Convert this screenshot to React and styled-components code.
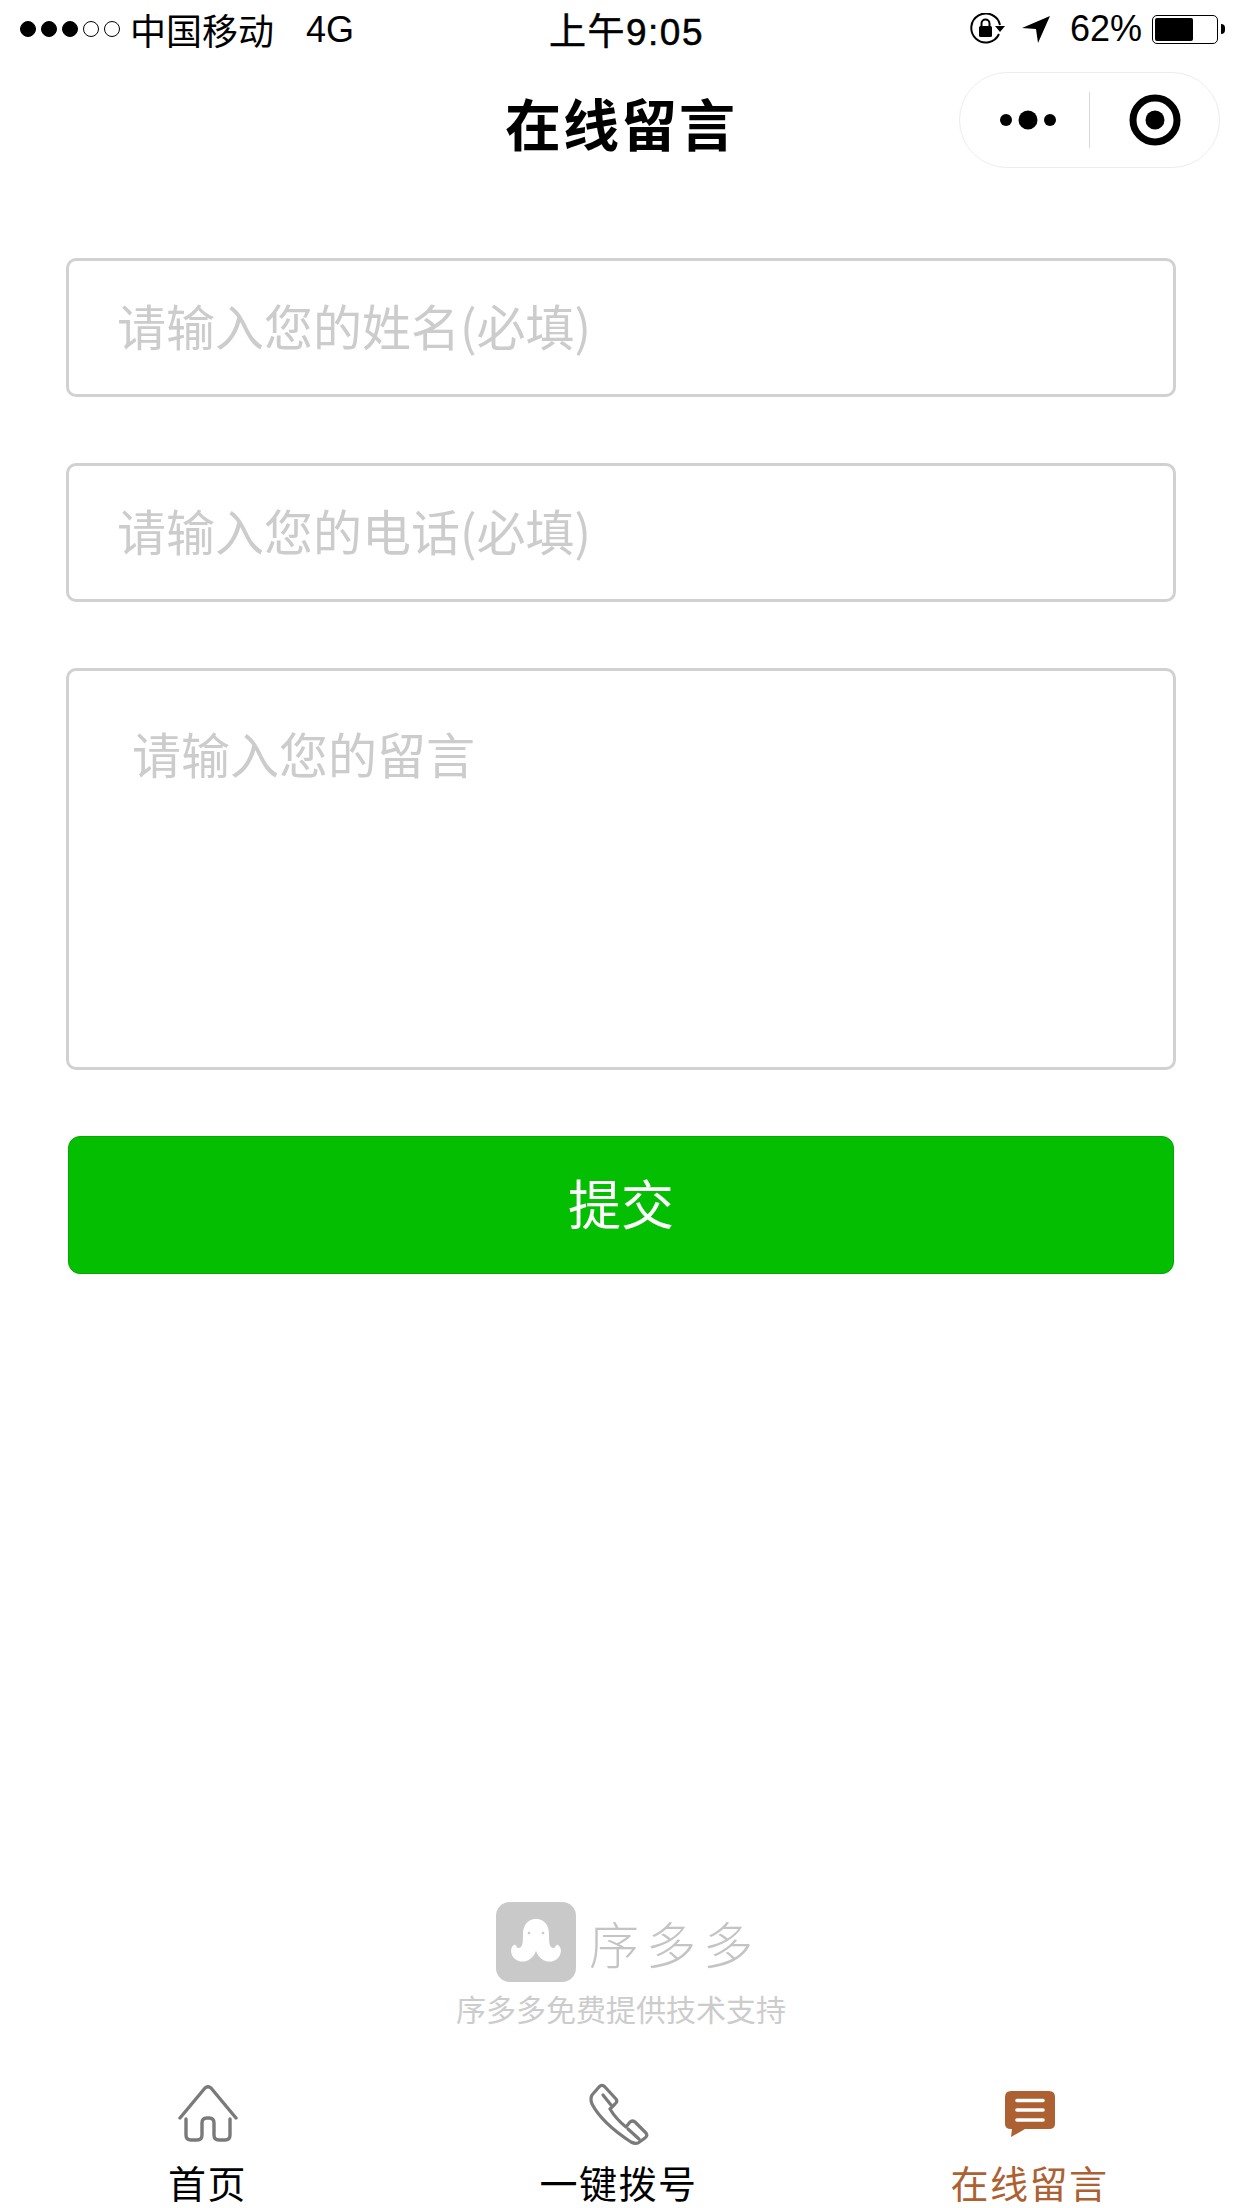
import React from "react";
import styled, { createGlobalStyle } from "styled-components";

const CJK = `"Noto Sans CJK SC", "Liberation Sans", sans-serif`;
const LATIN = `"Liberation Sans", "Noto Sans CJK SC", sans-serif`;

const GlobalStyle = createGlobalStyle`
  * { box-sizing: border-box; }
  html, body { margin: 0; padding: 0; background: #fff; }
`;

const Page = styled.div`
  width: 1242px;
  height: 2208px;
  overflow: hidden;
  display: flex;
  flex-direction: column;
  background: #fff;
  color: #000;
  font-family: ${CJK};
`;

const StatusBar = styled.div`
  height: 60px;
  padding: 0 17px 2px 20px;
  display: grid;
  grid-template-columns: 1fr auto 1fr;
  align-items: center;
  font-family: ${LATIN};
  font-size: 36px;
`;

const StatusLeft = styled.div`
  display: flex;
  align-items: center;
`;

const Signal = styled.div`
  display: flex;
  gap: 5px;
  margin-right: 10px;
`;

const Dot = styled.span`
  width: 16px;
  height: 16px;
  border-radius: 50%;
  border: 1.5px solid #000;
  background: ${(p) => (p.$on ? "#000" : "transparent")};
`;

const Network = styled.span`
  margin-left: 32px;
  padding-top: 2px;
`;

const Clock = styled.div`
  margin-left: 8px;
  font-size: 37px;
  letter-spacing: 1.5px;
  -webkit-text-stroke: 0.5px #000;
`;

const StatusRight = styled.div`
  display: flex;
  align-items: center;
  justify-content: flex-end;
  svg { display: block; }
`;

const StatusIcons = styled.div`
  display: flex;
  align-items: center;
  gap: 16px;
`;

const Percent = styled.span`
  margin: 0 10px 0 20px;
`;

const Battery = styled.div`
  position: relative;
  width: 66px;
  height: 29px;
  padding: 2px;
  border: 1.5px solid #000;
  border-radius: 5px;
  margin-right: 7px;
  &::after {
    content: "";
    position: absolute;
    right: -8px;
    top: 8px;
    width: 4px;
    height: 10px;
    background: #000;
    border-radius: 0 4px 4px 0;
  }
`;

const BatteryFill = styled.div`
  height: 100%;
  background: #000;
  border-radius: 2px;
`;

const NavBar = styled.div`
  position: relative;
  height: 120px;
  display: flex;
  align-items: center;
  justify-content: center;
  padding-top: 2px;
`;

const Title = styled.div`
  font-size: 56px;
  font-weight: 700;
  letter-spacing: 2px;
`;

const Capsule = styled.div`
  position: absolute;
  left: 959px;
  top: 12px;
  width: 261px;
  height: 96px;
  display: flex;
  align-items: center;
  border: 1.5px solid #ededed;
  border-radius: 48px;
`;

const CapsuleSide = styled.div`
  flex: 0 0 129px;
  display: flex;
  align-items: center;
  justify-content: center;
  height: 56px;
  padding-left: ${(p) => (p.$divided ? "2px" : "6px")};
  border-left: ${(p) => (p.$divided ? "1.5px solid #d8d8d8" : "none")};
  svg { display: block; }
`;

const Form = styled.form`
  padding: 78px 66px 0;
  display: flex;
  flex-direction: column;
  gap: 66px;
`;

const Field = styled.input`
  display: block;
  width: 100%;
  height: 139px;
  padding: 0 48px 6px;
  border: 3px solid #d1d1d1;
  border-radius: 10px;
  outline: none;
  background: #fff;
  font-family: ${CJK};
  font-size: 49px;
  &::placeholder { color: #cccccc; opacity: 1; }
`;

const MessageBox = styled.textarea`
  display: block;
  width: 100%;
  height: 402px;
  padding: 47px 63px;
  border: 3px solid #d1d1d1;
  border-radius: 10px;
  outline: none;
  resize: none;
  background: #fff;
  font-family: ${CJK};
  font-size: 49px;
  line-height: 70px;
  &::placeholder { color: #cccccc; opacity: 1; }
`;

const Submit = styled.button`
  display: block;
  width: 1106px;
  height: 138px;
  margin-left: 2px;
  padding: 0 0 6px;
  border: 1.5px solid #03a902;
  border-radius: 12px;
  background: #04be02;
  color: #fff;
  font-family: ${CJK};
  font-size: 53px;
`;

const Brand = styled.div`
  margin-top: auto;
  display: flex;
  flex-direction: column;
  align-items: center;
`;

const BrandRow = styled.div`
  display: flex;
  align-items: center;
  gap: 13px;
  padding-left: 14px;
  svg { display: block; }
`;

const WordMark = styled.span`
  font-size: 50px;
  line-height: 80px;
  font-weight: 300;
  letter-spacing: 7px;
  color: #c4c4c4;
`;

const BrandNote = styled.div`
  margin-top: 4px;
  font-size: 30px;
  line-height: 44px;
  color: #cccccc;
`;

const TabBar = styled.div`
  margin-top: 52px;
  height: 126px;
  padding-left: 2px;
  display: grid;
  grid-template-columns: repeat(3, 411px);
`;

const Tab = styled.div`
  display: flex;
  flex-direction: column;
  align-items: center;
  color: ${(p) => (p.$active ? "#ad6132" : "#000")};
  svg { display: block; }
`;

const TabIcon = styled.div`
  height: 64px;
  display: flex;
  align-items: center;
  justify-content: center;
`;

const TabLabel = styled.div`
  margin-top: 8px;
  font-size: 38px;
  line-height: 56px;
  letter-spacing: 1.5px;
`;

const HomeIcon = () => (
  <svg width="60" height="58" viewBox="0 0 60 58" fill="none" stroke="#7a7a7a" strokeWidth="3.4" strokeLinecap="round" strokeLinejoin="round">
    <path d="M2 33 L27 3 Q30 0.5 33 3 L58 33" />
    <path d="M8 34 V50 Q8 55 13 55 H19 Q24 55 24 50 V38 Q24 33 29 33 H31 Q36 33 36 38 V50 Q36 55 41 55 H47 Q52 55 52 50 V34" />
  </svg>
);

const PhoneIcon = () => (
  <svg width="60" height="62" viewBox="0 0 60 62" fill="none" stroke="#7a7a7a" strokeWidth="3.2" strokeLinecap="round" strokeLinejoin="round">
    <path d="M10 4 Q13 1 16 4 L27 16 Q29 19 26 21 L21 26 Q27 36 37 44 L41 39 Q44 37 46 39 L57 50 Q59 53 56 55 L49 60 Q46 61 42 59 Q13 40 3 21 Q1 16 3 12 Z" />
    <path d="M14 12 L22 22 M39 46 L50 56" />
  </svg>
);

const MessageIcon = () => (
  <svg width="50" height="46" viewBox="0 0 50 46">
    <path d="M6 0 H44 Q50 0 50 6 V33 Q50 38 44 38 H20 L6 46 L7 38 H6 Q0 38 0 33 V6 Q0 0 6 0 Z" fill="#ad6132" />
    <path d="M12 9.500 H38 M12 19 H38 M12 29 H38" stroke="#fff" strokeWidth="3.6" strokeLinecap="round" />
  </svg>
);

const LockRotationIcon = () => (
  <svg width="36" height="32" viewBox="0 0 36 32" fill="none">
    <path d="M29 21 A14.500 14.500 0 1 1 30 12" stroke="#000" strokeWidth="2" />
    <path d="M25 13 H35 L30 19 Z" fill="#000" />
    <rect x="9" y="13" width="13" height="11" rx="1.500" fill="#000" />
    <path d="M11.500 14 V10.500 A4 4 0 0 1 19.500 10.500 V14" stroke="#000" strokeWidth="2" />
  </svg>
);

const LocationIcon = () => (
  <svg width="28" height="28" viewBox="0 0 28 28">
    <path d="M28 1 L16 28 L14 14 L0 13 Z" fill="#000" />
  </svg>
);

const OctopusLogo = () => (
  <svg width="80" height="80" viewBox="0 0 80 80">
    <rect width="80" height="80" rx="14" fill="#c9c9c9" />
    <path d="M40 17 C31 17 27 24 27 32 C27 40 27 46 22 46 C20 46 21 42 18 43 C14 45 14 53 19 57 C25 62 36 60 40 49 C44 60 55 62 61 57 C66 53 66 45 62 43 C59 42 60 46 58 46 C53 46 53 40 53 32 C53 24 49 17 40 17 Z" fill="#fff" />
    <circle cx="33" cy="31" r="1.300" fill="#c9c9c9" />
    <circle cx="47" cy="31" r="1.300" fill="#c9c9c9" />
  </svg>
);

const signal = [true, true, true, false, false];

const tabs = [
  { label: "首页", icon: <HomeIcon /> },
  { label: "一键拨号", icon: <PhoneIcon /> },
  { label: "在线留言", icon: <MessageIcon />, active: true },
];

export default function App() {
  return (
    <Page>
      <GlobalStyle />
      <StatusBar>
        <StatusLeft>
          <Signal>
            {signal.map((on, i) => (
              <Dot key={i} $on={on} />
            ))}
          </Signal>
          中国移动
          <Network>4G</Network>
        </StatusLeft>
        <Clock>上午9:05</Clock>
        <StatusRight>
          <StatusIcons>
            <LockRotationIcon />
            <LocationIcon />
          </StatusIcons>
          <Percent>62%</Percent>
          <Battery>
            <BatteryFill style={{ width: "64%" }} />
          </Battery>
        </StatusRight>
      </StatusBar>

      <NavBar>
        <Title>在线留言</Title>
        <Capsule>
          <CapsuleSide>
            <svg width="56" height="20" viewBox="0 0 56 20" fill="#000">
              <circle cx="6" cy="10" r="6" />
              <circle cx="28" cy="10" r="9.500" />
              <circle cx="50" cy="10" r="6" />
            </svg>
          </CapsuleSide>
          <CapsuleSide $divided>
            <svg width="52" height="52" viewBox="0 0 52 52" fill="none">
              <circle cx="26" cy="26" r="22" stroke="#000" strokeWidth="7" />
              <circle cx="26" cy="26" r="9.500" fill="#000" />
            </svg>
          </CapsuleSide>
        </Capsule>
      </NavBar>

      <Form>
        <Field placeholder="请输入您的姓名(必填)" />
        <Field placeholder="请输入您的电话(必填)" />
        <MessageBox placeholder="请输入您的留言" />
        <Submit type="button">提交</Submit>
      </Form>

      <Brand>
        <BrandRow>
          <OctopusLogo />
          <WordMark>序多多</WordMark>
        </BrandRow>
        <BrandNote>序多多免费提供技术支持</BrandNote>
      </Brand>

      <TabBar>
        {tabs.map((tab) => (
          <Tab key={tab.label} $active={tab.active}>
            <TabIcon>{tab.icon}</TabIcon>
            <TabLabel>{tab.label}</TabLabel>
          </Tab>
        ))}
      </TabBar>
    </Page>
  );
}
